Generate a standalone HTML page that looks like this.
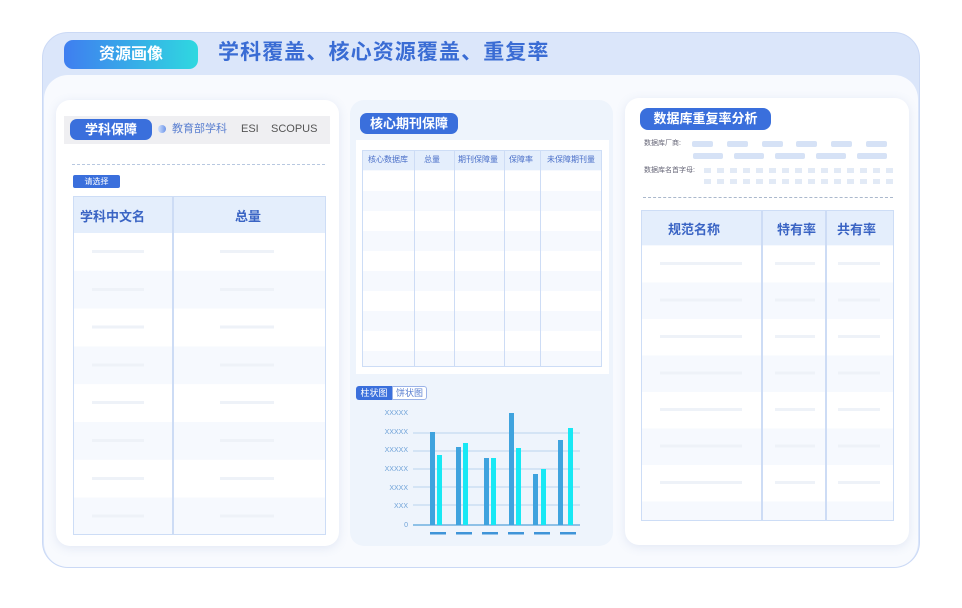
<!DOCTYPE html>
<html><head><meta charset="utf-8"><style>
*{margin:0;padding:0;box-sizing:border-box}
body{width:962px;height:608px;background:#fff;font-family:"Liberation Sans","Noto Sans CJK SC",sans-serif;position:relative;overflow:hidden}
.a{position:absolute}
.outer{left:42px;top:32px;width:878px;height:536px;border-radius:26px;background:#dbe6fa;border:1px solid #cbd9f5}
.inner{left:44px;top:75px;width:874px;height:492px;border-radius:24px;background:#f8fafe}
.badge{background:#3a6fdc;color:#fff;font-weight:bold;border-radius:7px;text-align:center}
.tb{border:1.5px solid #cdddf6}
.stripe{background:repeating-linear-gradient(#fff 0,#fff 50%,#f6f9fe 50%,#f6f9fe 100%)}
.pl{position:absolute}
</style></head><body>
<div class="a outer"></div>
<div class="a" style="left:64px;top:40px;width:134px;height:29px;border-radius:9px;background:linear-gradient(90deg,#3f7ef0,#2fd8e0);color:#fff;font-size:16px;font-weight:bold;text-align:center;line-height:29px">资源画像</div>
<div class="a" style="left:218px;top:39px;font-size:21px;font-weight:bold;color:#3a6cd4;line-height:28px;letter-spacing:1.1px">学科覆盖、核心资源覆盖、重复率</div>
<div class="a inner"></div>

<!-- left panel -->
<div class="a" style="left:56px;top:100px;width:283px;height:446px;background:#fff;border-radius:14px;box-shadow:0 2px 10px rgba(100,130,190,.15)"></div>
<div class="a" style="left:64px;top:116px;width:266px;height:28px;background:#efeff2"></div>
<div class="a badge" style="left:70px;top:119px;width:82px;height:21px;font-size:13px;line-height:21px">学科保障</div>
<div class="a" style="left:158px;top:125px;width:8px;height:8px;border-radius:50%;background:linear-gradient(90deg,#cfe0ff,#6d95e8)"></div>
<div class="a" style="left:172px;top:121px;font-size:11px;color:#5a7fd0;line-height:16px">教育部学科</div>
<div class="a" style="left:241px;top:121px;font-size:11px;color:#555;line-height:16px">ESI</div>
<div class="a" style="left:271px;top:121px;font-size:11px;color:#555;line-height:16px">SCOPUS</div>
<div class="a" style="left:72px;top:164px;width:253px;border-top:1px dashed #b8c8e0"></div>
<div class="a badge" style="left:73px;top:175px;width:47px;height:13px;font-size:8px;line-height:13px;font-weight:normal;border-radius:2px">请选择</div>
<div class="a tb stripe" style="left:73px;top:196px;width:253px;height:339px;background-size:100% 75.6px;background-position:0 36px"></div>
<div class="a" style="left:74px;top:197px;width:251px;height:36px;background:#e4eefc"></div>
<div class="a" style="left:172px;top:197px;width:1.5px;height:337px;background:#cddcf5"></div>
<div class="a" style="left:80px;top:206px;font-size:13px;font-weight:bold;color:#3a64c4">学科中文名</div>
<div class="a" style="left:235px;top:206px;font-size:13px;font-weight:bold;color:#3a64c4">总量</div>
<div class="pl" style="left:92px;top:233px;width:52px;height:300px;background:repeating-linear-gradient(transparent 0,transparent 17px,#eef2f8 17px,#eef2f8 20px,transparent 20px,transparent 37.8px)"></div>
<div class="pl" style="left:220px;top:233px;width:54px;height:300px;background:repeating-linear-gradient(transparent 0,transparent 17px,#eef2f8 17px,#eef2f8 20px,transparent 20px,transparent 37.8px)"></div>

<!-- middle panel -->
<div class="a" style="left:350px;top:100px;width:263px;height:446px;background:#eef4fc;border-radius:14px"></div>
<div class="a" style="left:356px;top:140px;width:253px;height:234px;background:#fff"></div>
<div class="a badge" style="left:360px;top:113px;width:98px;height:21px;font-size:13px;line-height:21px">核心期刊保障</div>
<div class="a tb stripe" style="left:362px;top:150px;width:240px;height:217px;background-size:100% 40px;background-position:0 20px"></div>
<div class="a" style="left:363px;top:151px;width:238px;height:19px;background:#e4eefc"></div>
<div class="a" style="left:414px;top:151px;width:1px;height:215px;background:#cddcf5"></div>
<div class="a" style="left:454px;top:151px;width:1px;height:215px;background:#cddcf5"></div>
<div class="a" style="left:504px;top:151px;width:1px;height:215px;background:#cddcf5"></div>
<div class="a" style="left:540px;top:151px;width:1px;height:215px;background:#cddcf5"></div>
<div class="a" style="left:362px;top:154px;width:240px;font-size:8px;color:#4a6fc8;line-height:12px">
<span class="a" style="left:6px">核心数据库</span><span class="a" style="left:62px">总量</span><span class="a" style="left:96px">期刊保障量</span><span class="a" style="left:147px">保障率</span><span class="a" style="left:185px">未保障期刊量</span></div>
<div class="a badge" style="left:356px;top:386px;width:36px;height:14px;font-size:9px;line-height:14px;font-weight:normal;border-radius:3px 0 0 3px">柱状图</div>
<div class="a" style="left:392px;top:386px;width:35px;height:14px;font-size:9px;line-height:12px;border:1px solid #9bb3e8;color:#5a7fd0;text-align:center;background:#fff;border-radius:0 3px 3px 0">饼状图</div>
<svg class="a" style="left:350px;top:400px" width="260" height="145">
<g font-size="7" fill="#6fa2d8" text-anchor="end" font-family="Liberation Sans">
<text x="58" y="15">XXXXX</text><text x="58" y="34">XXXXX</text><text x="58" y="52">XXXXX</text><text x="58" y="71">XXXXX</text><text x="58" y="90">XXXX</text><text x="58" y="108">XXX</text><text x="58" y="127">0</text></g>
<g stroke="#b9d4ee" stroke-width="1"><line x1="63" y1="33" x2="230" y2="33"/><line x1="63" y1="51" x2="230" y2="51"/><line x1="63" y1="69" x2="230" y2="69"/><line x1="63" y1="87" x2="230" y2="87"/><line x1="63" y1="105" x2="230" y2="105"/></g>
<line x1="63" y1="125" x2="230" y2="125" stroke="#6fb0e0" stroke-width="1.5"/>
<g fill="#3fa3de"><rect x="80" y="32" width="5" height="93"/><rect x="106" y="47" width="5" height="78"/><rect x="134" y="58" width="5" height="67"/><rect x="159" y="13" width="5" height="112"/><rect x="183" y="74" width="5" height="51"/><rect x="208" y="40" width="5" height="85"/></g>
<g fill="#18e8f4"><rect x="87" y="55" width="5" height="70"/><rect x="113" y="43" width="5" height="82"/><rect x="141" y="58" width="5" height="67"/><rect x="166" y="48" width="5" height="77"/><rect x="191" y="69" width="5" height="56"/><rect x="218" y="28" width="5" height="97"/></g>
<g fill="#3f94d8"><rect x="80" y="132" width="16" height="2.5"/><rect x="106" y="132" width="16" height="2.5"/><rect x="132" y="132" width="16" height="2.5"/><rect x="158" y="132" width="16" height="2.5"/><rect x="184" y="132" width="16" height="2.5"/><rect x="210" y="132" width="16" height="2.5"/></g>
</svg>

<!-- right panel -->
<div class="a" style="left:625px;top:98px;width:284px;height:447px;background:#fff;border-radius:14px;box-shadow:0 2px 10px rgba(100,130,190,.15)"></div>
<div class="a badge" style="left:640px;top:108px;width:131px;height:22px;font-size:13px;line-height:22px;border-radius:8px">数据库重复率分析</div>
<div class="a" style="left:644px;top:139px;font-size:7px;color:#667;line-height:10px">数据库厂商:</div>
<div class="a" style="left:644px;top:166px;font-size:7px;color:#667;line-height:10px">数据库名首字母:</div>
<svg class="a" style="left:690px;top:140px" width="210" height="48">
<g fill="#d6e2f6"><rect x="2" y="1" width="21" height="6" rx="2"/><rect x="37" y="1" width="21" height="6" rx="2"/><rect x="72" y="1" width="21" height="6" rx="2"/><rect x="106" y="1" width="21" height="6" rx="2"/><rect x="141" y="1" width="21" height="6" rx="2"/><rect x="176" y="1" width="21" height="6" rx="2"/>
<rect x="3" y="13" width="30" height="6" rx="2"/><rect x="44" y="13" width="30" height="6" rx="2"/><rect x="85" y="13" width="30" height="6" rx="2"/><rect x="126" y="13" width="30" height="6" rx="2"/><rect x="167" y="13" width="30" height="6" rx="2"/></g>
<g fill="#e2eaf6">
<rect x="14" y="28" width="7" height="5"/><rect x="27" y="28" width="7" height="5"/><rect x="40" y="28" width="7" height="5"/><rect x="53" y="28" width="7" height="5"/><rect x="66" y="28" width="7" height="5"/><rect x="79" y="28" width="7" height="5"/><rect x="92" y="28" width="7" height="5"/><rect x="105" y="28" width="7" height="5"/><rect x="118" y="28" width="7" height="5"/><rect x="131" y="28" width="7" height="5"/><rect x="144" y="28" width="7" height="5"/><rect x="157" y="28" width="7" height="5"/><rect x="170" y="28" width="7" height="5"/><rect x="183" y="28" width="7" height="5"/><rect x="196" y="28" width="7" height="5"/>
<rect x="14" y="39" width="7" height="5"/><rect x="27" y="39" width="7" height="5"/><rect x="40" y="39" width="7" height="5"/><rect x="53" y="39" width="7" height="5"/><rect x="66" y="39" width="7" height="5"/><rect x="79" y="39" width="7" height="5"/><rect x="92" y="39" width="7" height="5"/><rect x="105" y="39" width="7" height="5"/><rect x="118" y="39" width="7" height="5"/><rect x="131" y="39" width="7" height="5"/><rect x="144" y="39" width="7" height="5"/><rect x="157" y="39" width="7" height="5"/><rect x="170" y="39" width="7" height="5"/><rect x="183" y="39" width="7" height="5"/><rect x="196" y="39" width="7" height="5"/></g>
</svg>
<div class="a" style="left:643px;top:197px;width:250px;border-top:1px dashed #aab8cc"></div>
<div class="a tb stripe" style="left:641px;top:210px;width:253px;height:311px;background-size:100% 73px;background-position:0 35px"></div>
<div class="a" style="left:642px;top:211px;width:251px;height:34px;background:#e4eefc"></div>
<div class="a" style="left:761px;top:211px;width:1.5px;height:309px;background:#cddcf5"></div>
<div class="a" style="left:825px;top:211px;width:1.5px;height:309px;background:#cddcf5"></div>
<div class="a" style="left:668px;top:219px;font-size:13px;font-weight:bold;color:#3a64c4">规范名称</div>
<div class="a" style="left:777px;top:219px;font-size:13px;font-weight:bold;color:#3a64c4">特有率</div>
<div class="a" style="left:837px;top:219px;font-size:13px;font-weight:bold;color:#3a64c4">共有率</div>
<div class="pl" style="left:660px;top:245px;width:82px;height:272px;background:repeating-linear-gradient(transparent 0,transparent 17px,#eef2f8 17px,#eef2f8 20px,transparent 20px,transparent 36.5px)"></div>
<div class="pl" style="left:775px;top:245px;width:40px;height:272px;background:repeating-linear-gradient(transparent 0,transparent 17px,#eef2f8 17px,#eef2f8 20px,transparent 20px,transparent 36.5px)"></div>
<div class="pl" style="left:838px;top:245px;width:42px;height:272px;background:repeating-linear-gradient(transparent 0,transparent 17px,#eef2f8 17px,#eef2f8 20px,transparent 20px,transparent 36.5px)"></div>
</body></html>
